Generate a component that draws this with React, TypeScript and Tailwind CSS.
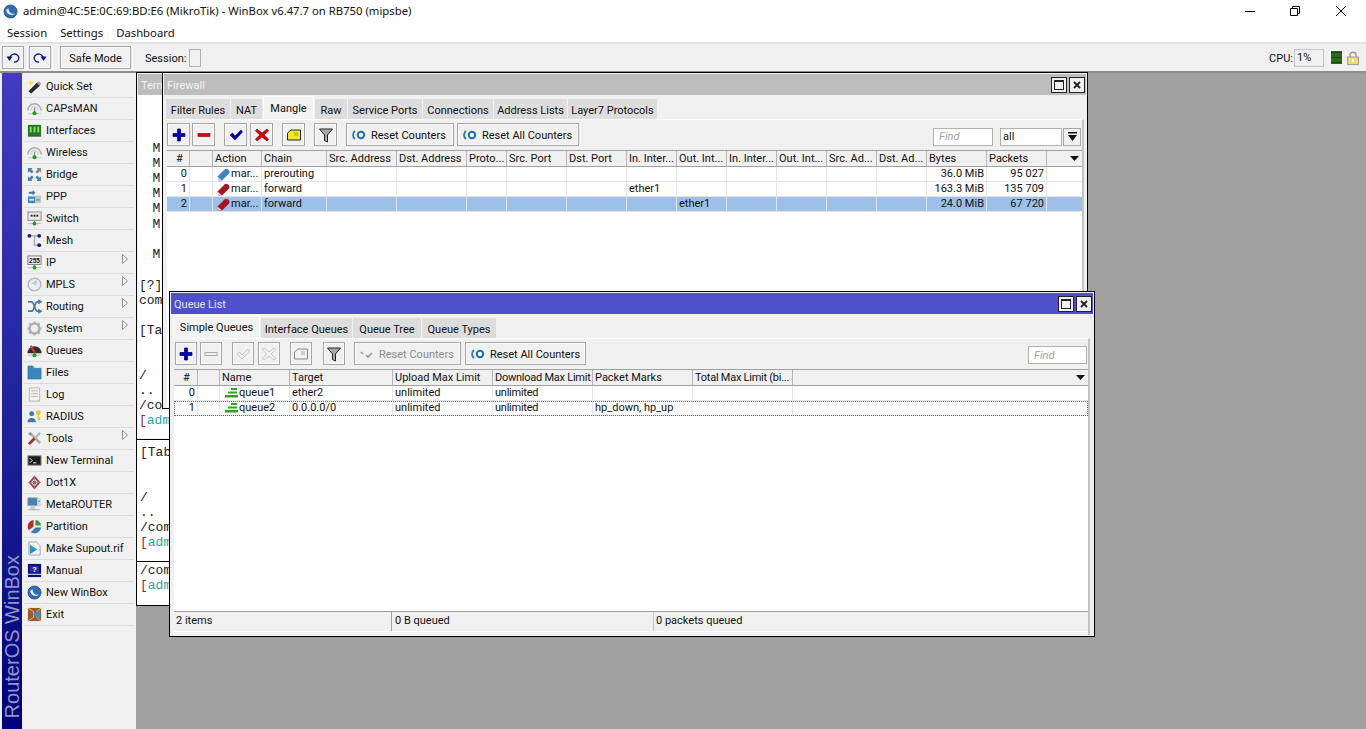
import type { ReactNode } from 'react';

const Svg = ({ children, className = 'w-4 h-4' }: { children: ReactNode; className?: string }) => (
  <svg viewBox="0 0 16 16" className={`${className} shrink-0`}>{children}</svg>
);

// Left menu icons
const navIcons: Record<string, ReactNode> = {
  wand: (
    <>
      <path d="M1.5 13 L10.5 4 L14 7 L4.5 15.5 Z" fill="#2b2b2b" />
      <path d="M10.5 4 L12.5 2.5 L15 5 L13.5 7.5 Z" fill="#9a9a9a" />
      <path d="M4 0.5 L5 3.5 L8 4 L5 5 L4 8 L3 5 L0.5 4 L3 3.5 Z" fill="#f2e640" />
    </>
  ),
  radio: (
    <>
      <path d="M1 10 A7 7 0 0 1 15 10" fill="none" stroke="#a8b0b0" strokeWidth="1.6" />
      <path d="M4 10 A4 4 0 0 1 12 10" fill="none" stroke="#cfd4d4" strokeWidth="1.4" />
      <rect x="7.2" y="7" width="1.6" height="6" fill="#8f9696" />
      <rect x="1" y="13" width="14" height="1" fill="#c5c9c9" />
      <circle cx="8" cy="13" r="2.2" fill="#17a317" />
    </>
  ),
  iface: (
    <>
      <rect x="1" y="2" width="14" height="11" fill="#1f7d1f" />
      <rect x="3" y="4" width="2" height="6" fill="#8fdc6a" />
      <rect x="7" y="4" width="2" height="6" fill="#8fdc6a" />
      <rect x="11" y="4" width="2" height="6" fill="#8fdc6a" />
      <rect x="1" y="13" width="14" height="1.5" fill="#333" />
    </>
  ),
  bridge: (
    <g fill="#4f7ea8">
      <path d="M1 1 H6 L4.5 2.5 L7 5 L5 7 L2.5 4.5 L1 6 Z" />
      <path d="M15 1 V6 L13.5 4.5 L11 7 L9 5 L11.5 2.5 L10 1 Z" fill="#7c8a96" />
      <path d="M1 15 V10 L2.5 11.5 L5 9 L7 11 L4.5 13.5 L6 15 Z" />
      <path d="M15 15 H10 L11.5 13.5 L9 11 L11 9 L13.5 11.5 L15 10 Z" />
    </g>
  ),
  ppp: (
    <>
      <path d="M2 3 H6 V1 L9 4 L6 7 V5 H2 Z" fill="#3f78b0" />
      <rect x="1" y="8" width="8" height="7" fill="#3f86c8" />
      <rect x="2.5" y="10.5" width="5" height="2" fill="#d8e8f4" />
      <rect x="9" y="7" width="6" height="8" fill="#c3c7c7" />
      <rect x="10" y="11" width="4" height="1.2" fill="#5aa05a" />
    </>
  ),
  switch: (
    <>
      <rect x="1" y="1" width="14" height="9" fill="#e8e8e8" stroke="#8a8a8a" />
      <rect x="4" y="4" width="2" height="2" fill="#222" />
      <rect x="7" y="4" width="2" height="2" fill="#222" />
      <rect x="10" y="4" width="2" height="2" fill="#222" />
      <rect x="1" y="13" width="14" height="1" fill="#b5b5b5" />
      <rect x="7.3" y="10" width="1.4" height="3" fill="#888" />
      <circle cx="8" cy="13.5" r="2" fill="#17a317" />
    </>
  ),
  mesh: (
    <>
      <path d="M3 3 H12 M8 3 V13 H13" fill="none" stroke="#a9b1b1" strokeWidth="1.6" />
      <circle cx="2.5" cy="3" r="2" fill="#14148c" />
      <circle cx="13" cy="3" r="2" fill="#14148c" />
      <circle cx="13" cy="13" r="2" fill="#14148c" />
    </>
  ),
  ip: (
    <>
      <rect x="1" y="1" width="14" height="9" fill="#f2f2f2" stroke="#777" />
      <text x="8" y="8.4" textAnchor="middle" fontSize="7" fontWeight="700" fontFamily="Liberation Sans" fill="#111">255</text>
      <rect x="1" y="13" width="14" height="1" fill="#b5b5b5" />
      <rect x="7.3" y="10" width="1.4" height="3" fill="#888" />
      <circle cx="8" cy="13.5" r="2" fill="#17a317" />
    </>
  ),
  mpls: (
    <>
      <circle cx="8" cy="8" r="6.8" fill="#e9eded" stroke="#b0b8b8" strokeWidth="1.4" />
      <path d="M5 10 A5 5 0 0 1 11 4 L10 8 Z" fill="#c3cccc" />
      <circle cx="6" cy="9" r="1.5" fill="#fff" />
    </>
  ),
  routing: (
    <g fill="none" stroke="#4a76a8" strokeWidth="1.8">
      <path d="M1 3 H5 C8 3 8 13 11 13 H14" />
      <path d="M1 13 H5 C8 13 8 3 11 3 H14" />
      <path d="M12 1 L15 3 L12 5 M12 11 L15 13 L12 15" strokeWidth="1.5" />
    </g>
  ),
  system: (
    <>
      <circle cx="8" cy="8" r="5.2" fill="none" stroke="#a9b0ae" strokeWidth="2.6" />
      <path d="M8 0.5 V3 M8 13 V15.5 M0.5 8 H3 M13 8 H15.5 M2.5 2.5 L4.5 4.5 M11.5 11.5 L13.5 13.5 M13.5 2.5 L11.5 4.5 M4.5 11.5 L2.5 13.5" stroke="#a9b0ae" strokeWidth="2.2" />
    </>
  ),
  queues: (
    <>
      <path d="M0.5 11 A7.5 7.5 0 0 1 15.5 11 Z" fill="#2d2d2d" />
      <path d="M4 3 L8.5 11" stroke="#e03030" strokeWidth="2.2" />
      <rect x="1" y="12.5" width="14" height="1" fill="#b9b9b9" />
      <circle cx="8" cy="13" r="2.2" fill="#17a317" />
    </>
  ),
  files: <path d="M1 1 H6 L8 3.5 H15 V15 H1 Z" fill="#3a86bf" stroke="#2a6a9c" strokeWidth="0.6" />,
  log: (
    <>
      <path d="M2.5 1 H13.5 V15 H2.5 Z" fill="#f4f4ee" stroke="#b5b5ac" />
      <path d="M4.5 4 H11.5 M4.5 7 H11.5 M4.5 10 H11.5" stroke="#b0b0a6" />
    </>
  ),
  radius: (
    <>
      <circle cx="5" cy="5" r="2.6" fill="#3d78b0" />
      <path d="M0.5 14 C0.5 8 9.5 8 9.5 14 Z" fill="#3d78b0" />
      <circle cx="12" cy="4" r="2.6" fill="#eec52d" />
      <path d="M12 6 V12 M12 9 H14 M12 11 H14" stroke="#eec52d" strokeWidth="1.5" />
    </>
  ),
  tools: (
    <>
      <path d="M3 2 L14 13" stroke="#a8adad" strokeWidth="2.6" />
      <path d="M1 3 L4 1 L5 4 L3.5 5 Z" fill="#8f9595" />
      <path d="M14 2 L8 8" stroke="#b0b5b5" strokeWidth="2.4" />
      <path d="M8 8 L2 14" stroke="#b3262c" strokeWidth="3" />
    </>
  ),
  terminal: (
    <>
      <rect x="1" y="3" width="14" height="10" fill="#1e1e1e" stroke="#8a8a8a" />
      <path d="M3 5.5 L5.5 8 L3 10.5" fill="none" stroke="#fff" />
      <path d="M6.5 10.5 H10" stroke="#fff" />
    </>
  ),
  dot1x: (
    <>
      <path d="M8 2 L13 8 L8 14 L3 8 Z" fill="none" stroke="#b9343e" strokeWidth="2" />
      <circle cx="8" cy="8" r="2" fill="#555" />
      <path d="M1 8 H15 M8 1 V15" stroke="#8a8a8a" strokeWidth="0.8" />
    </>
  ),
  meta: (
    <>
      <rect x="1" y="1" width="10" height="8" fill="#3f80bd" stroke="#8a979f" />
      <rect x="11" y="1" width="4" height="9" fill="#d7dada" />
      <rect x="12" y="4" width="2" height="1" fill="#3d9a3d" />
      <path d="M4 9 H8 L9 13 H3 Z" fill="#c8cccc" />
      <rect x="1" y="13" width="13" height="1.2" fill="#b3b7b7" />
    </>
  ),
  partition: (
    <>
      <path d="M7 1 A7 7 0 0 0 2 12 L7 8 Z" fill="#c4282e" />
      <path d="M9 1 A7 7 0 0 1 15 7 H9 Z" fill="#2f9a3a" />
      <path d="M15 9 A7 7 0 0 1 4 14 L9 9 Z" fill="#3a7db5" />
    </>
  ),
  supout: (
    <>
      <path d="M2 1 H10 L14 5 V15 H2 Z" fill="#f0f3f5" stroke="#9aa5ad" />
      <path d="M3 4 L11 9 L3 14 Z" fill="#2e8fc4" />
    </>
  ),
  manual: (
    <>
      <rect x="1" y="1" width="14" height="14" fill="#0c0c78" />
      <rect x="3" y="3" width="10" height="7" fill="#2a2aa8" />
      <text x="8" y="9.5" textAnchor="middle" fontSize="8" fontWeight="700" fontFamily="Liberation Sans" fill="#fff">?</text>
      <rect x="1" y="11.5" width="14" height="1" fill="#fff" />
    </>
  ),
  logo: (
    <>
      <circle cx="8" cy="8" r="7" fill="#2f6db0" stroke="#1c4a80" strokeWidth="0.8" />
      <path d="M3.5 7 C4.5 12 10 13 13 10 C9.5 11 6.5 10 5.8 4.5 C4.5 5 3.8 5.8 3.5 7 Z" fill="#e8f0f8" />
    </>
  ),
  exit: (
    <>
      <rect x="1" y="1" width="14" height="14" fill="#9a5a2c" />
      <path d="M1 1 L7 5 V11 L1 15 M15 1 L10 5 M15 15 L10 11" stroke="#e3c090" fill="none" />
      <path d="M14 3 V13 L6 8 Z" fill="#3a8fd0" />
    </>
  ),
};

const navItems: { label: string; icon: string; sub?: boolean }[] = [
  { label: 'Quick Set', icon: 'wand' },
  { label: 'CAPsMAN', icon: 'radio' },
  { label: 'Interfaces', icon: 'iface' },
  { label: 'Wireless', icon: 'radio' },
  { label: 'Bridge', icon: 'bridge' },
  { label: 'PPP', icon: 'ppp' },
  { label: 'Switch', icon: 'switch' },
  { label: 'Mesh', icon: 'mesh' },
  { label: 'IP', icon: 'ip', sub: true },
  { label: 'MPLS', icon: 'mpls', sub: true },
  { label: 'Routing', icon: 'routing', sub: true },
  { label: 'System', icon: 'system', sub: true },
  { label: 'Queues', icon: 'queues' },
  { label: 'Files', icon: 'files' },
  { label: 'Log', icon: 'log' },
  { label: 'RADIUS', icon: 'radius' },
  { label: 'Tools', icon: 'tools', sub: true },
  { label: 'New Terminal', icon: 'terminal' },
  { label: 'Dot1X', icon: 'dot1x' },
  { label: 'MetaROUTER', icon: 'meta' },
  { label: 'Partition', icon: 'partition' },
  { label: 'Make Supout.rif', icon: 'supout' },
  { label: 'Manual', icon: 'manual' },
  { label: 'New WinBox', icon: 'logo' },
  { label: 'Exit', icon: 'exit' },
];

function Sidebar() {
  return (
    <div className="flex h-full w-[136px] shrink-0 bg-[#f0f0f0]">
      <div className="ml-[2px] flex h-full w-[20px] items-end justify-center bg-gradient-to-b from-[#423cc0] to-[#00007c] pb-[11px]">
        <span className="rotate-180 whitespace-nowrap font-['Liberation_Sans',sans-serif] text-[20px] leading-[20px] text-[#9295c4] [writing-mode:vertical-rl]">RouterOS WinBox</span>
      </div>
      <div className="flex flex-1 flex-col pt-[3px]">
        {navItems.map(item => (
          <div key={item.label} className="relative mx-[2px] flex h-[22px] items-center gap-[4px] border-b border-[#dcdcdc] pl-[3px]">
            <Svg className="h-[15px] w-[15px]">{navIcons[item.icon]}</Svg>
            <span className="pt-[2px] text-[#111]">{item.label}</span>
            {item.sub && (
              <svg viewBox="0 0 6 10" className="absolute right-[6px] top-[2px] h-[10px] w-[6px]">
                <path d="M0.5 0.5 L5.5 5 L0.5 9.5 Z" fill="#f5f5f5" stroke="#8f8f8f" />
              </svg>
            )}
          </div>
        ))}
      </div>
    </div>
  );
}

function Win({ title, active, className, children }: { title: string; active?: boolean; className: string; children?: ReactNode }) {
  return (
    <div className={`absolute flex flex-col border border-black bg-[#f0f0f0] p-px ${className}`}>
      <div className={`flex h-[21px] shrink-0 items-center justify-between pl-[3px] pr-[1px] ${active ? 'bg-[#4e50cc] text-[#e4e4f4]' : 'bg-[#bdbdbd] text-[#f2f2f2]'}`}>
        <span className="pt-[3px]">{title}</span>
        <div className="flex gap-[2px]">
          <div className="flex h-[16px] w-[16px] items-center justify-center border border-[#222] bg-[#efefef]">
            <div className="h-[10px] w-[10px] border border-t-2 border-[#222]" />
          </div>
          <div className="flex h-[16px] w-[16px] items-center justify-center border border-[#222] bg-[#efefef]">
            <svg viewBox="0 0 8 8" className="h-[8px] w-[8px]"><path d="M1 1 L7 7 M7 1 L1 7" stroke="#222" strokeWidth="1.8" /></svg>
          </div>
        </div>
      </div>
      {children}
    </div>
  );
}

function Tabs({ tabs, activeTab, widths, className }: { tabs: string[]; activeTab: string; widths: string[]; className: string }) {
  return (
    <div className={`flex h-[23px] shrink-0 items-end gap-px ${className}`}>
      {tabs.map((t, i) => (
        <div
          key={t}
          className={`flex items-center justify-center whitespace-nowrap ${widths[i]} ${t === activeTab ? 'h-[23px] border border-b-0 border-white bg-[#f2f2f2] pt-[2px]' : 'h-[20px] bg-[#dddddd] pt-[4px]'}`}
        >
          {t}
        </div>
      ))}
    </div>
  );
}

const ToolBtn = ({ className, children }: { className: string; children: ReactNode }) => (
  <div className={`flex h-[23px] shrink-0 items-center justify-center whitespace-nowrap border border-[#a6a6a6] bg-[#f0f0f0] shadow-[inset_0_0_0_1px_#fafafa] ${className}`}>
    {children}
  </div>
);

const ResetBtn = ({ label, className, off }: { label: string; className: string; off?: boolean }) => (
  <div className={`flex h-[23px] shrink-0 items-center gap-[5px] whitespace-nowrap border border-[#a6a6a6] bg-[#f0f0f0] pl-[5px] shadow-[inset_0_0_0_1px_#fafafa] ${off ? 'text-[#8c8c8c]' : ''} ${className}`}>
    <ResetIcon off={off} />
    <span className="pt-[3px]">{label}</span>
  </div>
);

const PlusIcon = () => <Svg><path d="M6.5 2 H9.5 V6.5 H14 V9.5 H9.5 V14 H6.5 V9.5 H2 V6.5 H6.5 Z" fill="#0000c8" stroke="#000050" strokeWidth="0.7" /></Svg>;
const MinusIcon = ({ off }: { off?: boolean }) => off
  ? <Svg><rect x="2" y="6.5" width="12" height="3" fill="#f0f0f0" stroke="#aaa" /></Svg>
  : <Svg><rect x="2" y="6.5" width="12" height="3" fill="#e00000" stroke="#600" strokeWidth="0.6" /></Svg>;
const CheckIcon = ({ off }: { off?: boolean }) => <Svg><path d="M2 8 L4.5 6 L7 9 L13 3 L14.5 5 L7 13 Z" fill={off ? '#f2f2f2' : '#0000c0'} stroke={off ? '#aaa' : '#000050'} strokeWidth="0.6" /></Svg>;
const CrossIcon = ({ off }: { off?: boolean }) => <Svg><path d="M3 2 L8 6 L13 2 L14.5 4 L10 8 L14.5 12 L13 14 L8 10 L3 14 L1.5 12 L6 8 L1.5 4 Z" fill={off ? '#f2f2f2' : '#e00000'} stroke={off ? '#aaa' : '#500'} strokeWidth="0.6" /></Svg>;
const NoteIcon = ({ off }: { off?: boolean }) => <Svg><path d="M1.5 6 L5 3 H14.5 V13 H1.5 Z" fill={off ? '#f2f2f2' : '#f4e62a'} stroke={off ? '#888' : '#222'} /><path d="M8 6 H12 M8 8 H12" stroke={off ? '#aaa' : '#b0a000'} /></Svg>;
const FilterIcon = () => <Svg><path d="M1.5 2 H14.5 L9.5 8 V15 L6.5 13.5 V8 Z" fill="#a8a8a8" stroke="#222" /></Svg>;
const ResetIcon = ({ off }: { off?: boolean }) => off ? (
  <svg viewBox="0 0 14 10" className="h-[10px] w-[14px]"><path d="M1 3 L3 5 M6 6 L8 8 L12 4" fill="none" stroke="#999" strokeWidth="1.6" /></svg>
) : (
  <svg viewBox="0 0 14 10" className="h-[10px] w-[14px]"><path d="M3 1 A5 5 0 0 0 3 9" fill="none" stroke="#2a78c0" strokeWidth="1.8" /><circle cx="9" cy="5" r="3.2" fill="#fff" stroke="#1b6cb8" strokeWidth="2" /></svg>
);

interface Col { label: string; w: string; right?: boolean }

const HeaderRow = ({ cols }: { cols: Col[] }) => (
  <div className="flex h-[17px] shrink-0 border-y border-[#a0a0a0] bg-[#f0f0f0]">
    {cols.map((c, i) => (
      <div key={i} className={`overflow-hidden whitespace-nowrap border-r border-[#b5b5b5] pl-[2px] leading-[15px] ${c.w} ${i === 0 ? 'pl-[9px]' : ''}`}>{c.label}</div>
    ))}
    <div className="relative flex-1">
      <svg viewBox="0 0 9 5" className="absolute right-[3px] top-[5px] h-[5px] w-[9px]"><path d="M0 0 H9 L4.5 5 Z" fill="#111" /></svg>
    </div>
  </div>
);

const Row = ({ cols, cells, selected, focused }: { cols: Col[]; cells: ReactNode[]; selected?: boolean; focused?: boolean }) => (
  <div className={`flex h-[15px] shrink-0 border-b ${selected ? 'border-[#e4e4e4] bg-[#9dbfe8]' : 'border-[#e4e4e4]'} ${focused ? 'outline-1 -outline-offset-1 outline-dotted outline-[#666]' : ''}`}>
    {cols.map((c, i) => (
      <div key={i} className={`flex items-center whitespace-nowrap border-r border-[#e4e4e4] leading-[14px] ${c.w} ${c.right ? 'justify-end pr-[2px]' : 'pl-[2px]'}`}>{cells[i]}</div>
    ))}
    <div className="flex-1" />
  </div>
);

const Pencil = ({ color }: { color: string }) => (
  <svg viewBox="0 0 13 13" className="ml-[2px] h-[13px] w-[13px] shrink-0"><path d="M0.5 8.5 L7.5 1.5 C9.5 -0.5 14 2.5 12 5.5 L5 12.5 L1.5 12.5 Z" fill={color} /><path d="M0.5 8.5 L5 12.5 L1.5 12.5 Z" fill="#e6d8c8" /></svg>
);
const QueueIcon = () => (
  <svg viewBox="0 0 14 10" className="ml-[3px] h-[10px] w-[14px] shrink-0"><path d="M6 0 H12 V2 H6 Z M3 3.5 H12 V5.5 H3 Z M0 7 H13 V9.5 H0 Z" fill="#26a81c" /></svg>
);

const fwCols: Col[] = [
  { label: '#', w: 'w-[23px]', right: true },
  { label: '', w: 'w-[23px]' },
  { label: 'Action', w: 'w-[49px]' },
  { label: 'Chain', w: 'w-[65px]' },
  { label: 'Src. Address', w: 'w-[70px]' },
  { label: 'Dst. Address', w: 'w-[70px]' },
  { label: 'Proto...', w: 'w-[40px]' },
  { label: 'Src. Port', w: 'w-[60px]' },
  { label: 'Dst. Port', w: 'w-[60px]' },
  { label: 'In. Inter...', w: 'w-[50px]' },
  { label: 'Out. Int...', w: 'w-[50px]' },
  { label: 'In. Inter...', w: 'w-[50px]' },
  { label: 'Out. Int...', w: 'w-[50px]' },
  { label: 'Src. Ad...', w: 'w-[50px]' },
  { label: 'Dst. Ad...', w: 'w-[50px]' },
  { label: 'Bytes', w: 'w-[60px]', right: true },
  { label: 'Packets', w: 'w-[60px]', right: true },
];

const mark = (color: string) => (
  <span className="flex items-center gap-px"><Pencil color={color} />mar...</span>
);

const fwRows: { cells: ReactNode[]; selected?: boolean }[] = [
  { cells: ['0', '', mark('#3d82c8'), 'prerouting', '', '', '', '', '', '', '', '', '', '', '', '36.0 MiB', '95 027'] },
  { cells: ['1', '', mark('#a8141c'), 'forward', '', '', '', '', '', 'ether1', '', '', '', '', '', '163.3 MiB', '135 709'] },
  { cells: ['2', '', mark('#a8141c'), 'forward', '', '', '', '', '', '', 'ether1', '', '', '', '', '24.0 MiB', '67 720'], selected: true },
];

const qCols: Col[] = [
  { label: '#', w: 'w-[24px]', right: true },
  { label: '', w: 'w-[22px]' },
  { label: 'Name', w: 'w-[70px]' },
  { label: 'Target', w: 'w-[103px]' },
  { label: 'Upload Max Limit', w: 'w-[100px]' },
  { label: 'Download Max Limit', w: 'w-[100px] tracking-[-0.25px]' },
  { label: 'Packet Marks', w: 'w-[100px]' },
  { label: 'Total Max Limit (bi...', w: 'w-[100px] tracking-[-0.25px]' },
];

const qName = (name: string) => (
  <span className="flex items-center"><QueueIcon />{name}</span>
);

function Firewall() {
  return (
    <Win title="Firewall" className="left-[162px] top-[72px] z-20 h-[337px] w-[926px]">
      <Tabs
        className="mt-[1px] pl-[2px]"
        activeTab="Mangle"
        tabs={['Filter Rules', 'NAT', 'Mangle', 'Raw', 'Service Ports', 'Connections', 'Address Lists', 'Layer7 Protocols']}
        widths={['w-[64px]', 'w-[31px]', 'w-[51px]', 'w-[32px]', 'w-[74px]', 'w-[70px]', 'w-[73px]', 'w-[89px]']}
      />
      <div className="ml-[3px] mr-[2px] flex min-h-0 flex-1 flex-col border-r-2 border-t border-r-[#c4c4c4] border-t-white pt-[3px]">
        <div className="flex h-[23px] shrink-0 items-center">
          <ToolBtn className="w-[23px]"><PlusIcon /></ToolBtn>
          <ToolBtn className="ml-[2px] w-[23px]"><MinusIcon /></ToolBtn>
          <ToolBtn className="ml-[9px] w-[23px]"><CheckIcon /></ToolBtn>
          <ToolBtn className="ml-[3px] w-[23px]"><CrossIcon /></ToolBtn>
          <ToolBtn className="ml-[9px] w-[23px]"><NoteIcon /></ToolBtn>
          <ToolBtn className="ml-[9px] w-[23px]"><FilterIcon /></ToolBtn>
          <ResetBtn label="Reset Counters" className="ml-[9px] w-[108px]" />
          <ResetBtn label="Reset All Counters" className="ml-[3px] w-[122px]" />
          <div className="ml-[354px] mt-[4px] flex h-[18px] w-[60px] items-center border border-[#b0b0b0] bg-white pl-[5px] pt-[2px] italic text-[#a0a0a0]">Find</div>
          <div className="ml-[7px] mt-[4px] flex h-[18px] w-[62px] items-center border border-[#b0b0b0] bg-white pl-[2px] pt-[2px]">all</div>
          <div className="ml-[1px] mt-[4px] flex h-[18px] w-[18px] items-center justify-center border border-[#a6a6a6]">
            <svg viewBox="0 0 9 9" className="h-[9px] w-[9px]"><path d="M0 0 H9 V1.5 H0 Z M0 3 H9 L4.5 9 Z" fill="#111" /></svg>
          </div>
        </div>
        <div className="mt-[4px] flex min-h-0 flex-1 flex-col bg-white">
          <HeaderRow cols={fwCols} />
          {fwRows.map((r, i) => <Row key={i} cols={fwCols} cells={r.cells} selected={r.selected} />)}
        </div>
      </div>
    </Win>
  );
}

function QueueList() {
  return (
    <Win title="Queue List" active className="left-[169px] top-[291px] z-30 h-[346px] w-[926px]">
      <Tabs
        className="mt-[1px] pl-[2px]"
        activeTab="Simple Queues"
        tabs={['Simple Queues', 'Interface Queues', 'Queue Tree', 'Queue Types']}
        widths={['w-[87px]', 'w-[91px]', 'w-[68px]', 'w-[74px]']}
      />
      <div className="mx-[3px] flex min-h-0 flex-1 flex-col border-r-2 border-t border-r-[#c4c4c4] border-t-white pt-[3px]">
        <div className="flex h-[23px] shrink-0 items-center pl-px">
          <ToolBtn className="w-[22px]"><PlusIcon /></ToolBtn>
          <ToolBtn className="ml-[3px] w-[22px]"><MinusIcon off /></ToolBtn>
          <ToolBtn className="ml-[10px] w-[22px]"><CheckIcon off /></ToolBtn>
          <ToolBtn className="ml-[4px] w-[22px]"><CrossIcon off /></ToolBtn>
          <ToolBtn className="ml-[10px] w-[22px]"><NoteIcon off /></ToolBtn>
          <ToolBtn className="ml-[11px] w-[22px]"><FilterIcon /></ToolBtn>
          <ResetBtn off label="Reset Counters" className="ml-[9px] w-[107px]" />
          <ResetBtn label="Reset All Counters" className="ml-[4px] w-[121px]" />
          <div className="ml-[442px] mt-[3px] flex h-[18px] w-[59px] items-center border border-[#b0b0b0] bg-white pl-[5px] pt-[2px] italic text-[#a0a0a0]">Find</div>
        </div>
        <div className="mt-[4px] flex min-h-0 flex-1 flex-col bg-white">
          <HeaderRow cols={qCols} />
          <Row cols={qCols} cells={['0', '', qName('queue1'), 'ether2', 'unlimited', 'unlimited', '', '']} />
          <Row focused cols={qCols} cells={['1', '', qName('queue2'), '0.0.0.0/0', 'unlimited', 'unlimited', 'hp_down, hp_up', '']} />
        </div>
        <div className="flex h-[20px] shrink-0 border-t border-[#a0a0a0] bg-[#f0f0f0] leading-[18px]">
          <div className="w-[218px] border-r border-[#a0a0a0] pl-[2px]">2 items</div>
          <div className="w-[262px] border-r border-[#c4c4c4] pl-[3px]">0 B queued</div>
          <div className="pl-[2px]">0 packets queued</div>
        </div>
        <div className="h-[4px] shrink-0 border-t border-white" />
      </div>
    </Win>
  );
}

// Terminal fragments peeking out behind the Firewall window
interface TermLine { text: string; cls?: string; prompt?: boolean }

function TermLines({ lines, className }: { lines: TermLine[]; className: string }) {
  return (
    <div className={`overflow-hidden whitespace-pre font-['Liberation_Mono',monospace] text-[13px] leading-[15px] text-[#222] ${className}`}>
      {lines.map((l, i) => (
        <div key={i} className={`h-[15px] ${l.cls ?? ''}`}>
          {l.prompt ? <><span className="text-[#8c2a2a]">[</span><span className="text-[#19a7a7]">admin</span></> : l.text}
        </div>
      ))}
    </div>
  );
}

const t = (text: string, cls?: string): TermLine => ({ text, cls });
const m = t('  M', '-ml-[2px]');
const promptLine: TermLine = { text: '', prompt: true };

function Terminals() {
  return (
    <>
      <Win title="Terminal" className="left-[136px] top-[72px] z-10 h-[368px] w-[120px]">
        <TermLines
          className="flex-1 bg-white pl-[1px] pt-[46px]"
          lines={[m, m, m, m, m, t('  M', '-ml-[2px] mt-px'), t(''), m, t(''), t('[?]', 'mt-px'), t('comm'), t(''), t('[Tab'), t(''), t(''), t('/'), t('..'), t('/com'), promptLine]}
        />
      </Win>
      <div className="absolute left-[136px] top-[439px] z-10 h-[123px] w-[120px] border border-black bg-white">
        <TermLines className="pl-[3px] pt-[5px]" lines={[t('[Tab'), t(''), t(''), t('/'), t('..'), t('/com'), promptLine]} />
      </div>
      <div className="absolute left-[136px] top-[561px] z-10 h-[45px] w-[120px] border border-black bg-white">
        <TermLines className="pl-[3px] pt-[1px]" lines={[t('/com'), promptLine]} />
      </div>
    </>
  );
}

export default function App() {
  return (
    <div className="flex h-[729px] w-[1366px] flex-col overflow-hidden bg-white font-['Roboto',sans-serif] text-[11px] text-[#111]">
      <div className="flex h-[22px] shrink-0 items-center pl-[3px]">
        <Svg className="h-[15px] w-[15px]">{navIcons.logo}</Svg>
        <span className="ml-[5px] font-['Noto_Sans',sans-serif] text-[11.3px]">admin@4C:5E:0C:69:BD:E6 (MikroTik) - WinBox v6.47.7 on RB750 (mipsbe)</span>
        <div className="ml-auto flex items-center">
          <div className="h-px w-[10px] bg-black" />
          <svg viewBox="0 0 10 10" className="ml-[35px] h-[10px] w-[10px]"><path d="M0.5 2.5 H7.5 V9.5 H0.5 Z M2.5 2.5 V0.5 H9.5 V7.5 H7.5" fill="none" stroke="#000" /></svg>
          <svg viewBox="0 0 10 10" className="ml-[36px] mr-[20px] h-[10px] w-[10px]"><path d="M0 0 L10 10 M10 0 L0 10" stroke="#000" /></svg>
        </div>
      </div>
      <div className="flex h-[20px] shrink-0 items-center gap-[13px] pl-[7px] pt-[2px] font-['Noto_Sans',sans-serif] text-[11.3px]">
        <span>Session</span>
        <span>Settings</span>
        <span>Dashboard</span>
      </div>
      <div className="flex h-[31px] shrink-0 items-center border-b-2 border-t-2 border-b-[#8c8c8c] border-t-[#e4e4e4] bg-[#f0f0f0] pl-[2px]">
        <ToolBtn className="w-[22px]">
          <svg viewBox="0 0 14 10" className="h-[10px] w-[14px]"><path d="M4 6 A4.5 4 0 1 1 8 9" fill="none" stroke="#14148c" strokeWidth="1.3" /><path d="M0.5 3.5 H6.5 L3.5 8 Z" fill="#14148c" /></svg>
        </ToolBtn>
        <ToolBtn className="ml-[5px] w-[22px]">
          <svg viewBox="0 0 14 10" className="h-[10px] w-[14px]"><path d="M10 6 A4.5 4 0 1 0 6 9" fill="none" stroke="#14148c" strokeWidth="1.3" /><path d="M13.5 3.5 H7.5 L10.5 8 Z" fill="#14148c" /></svg>
        </ToolBtn>
        <ToolBtn className="ml-[9px] w-[71px] pt-[3px]">Safe Mode</ToolBtn>
        <span className="ml-[14px] pt-[3px]">Session:</span>
        <div className="ml-[3px] h-[18px] w-[12px] border border-[#b0b0b0]" />
        <span className="ml-auto pt-[3px]">CPU:</span>
        <div className="ml-px flex h-[18px] w-[30px] items-center border border-[#c4c4c4] pl-[2px] pt-[2px]">1%</div>
        <div className="ml-[7px] flex h-[13px] w-[11px] flex-col justify-between bg-[#2f6a1e] py-px">
          <div className="h-px bg-[#1b4510]" />
          <div className="h-px bg-[#1b4510]" />
          <div className="h-px bg-[#1b4510]" />
        </div>
        <svg viewBox="0 0 12 14" className="ml-[5px] mr-[7px] h-[14px] w-[12px]">
          <path d="M3 6 V3.5 C3 0.5 9 0.5 9 3.5 V6" fill="none" stroke="#999" strokeWidth="1.4" />
          <rect x="0.5" y="6" width="11" height="7.5" fill="#f3d96a" stroke="#a99" />
          <rect x="5" y="8" width="2" height="3" fill="#fff" />
        </svg>
      </div>
      <div className="relative flex min-h-0 flex-1 bg-[#a0a0a0]">
        <Sidebar />
      </div>
      <div className="pointer-events-none absolute inset-0 z-0">
        <Terminals />
        <Firewall />
        <QueueList />
      </div>
    </div>
  );
}
